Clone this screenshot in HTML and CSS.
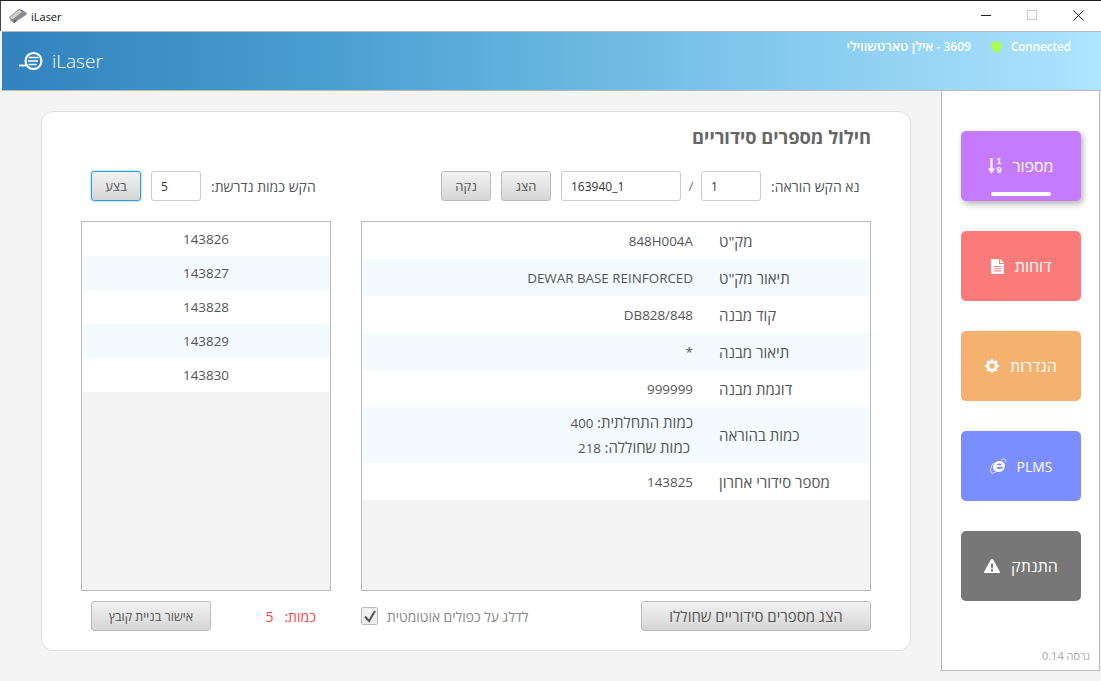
FILE: index.html
```html
<!DOCTYPE html>
<html lang="he">
<head>
<meta charset="utf-8">
<title>iLaser</title>
<link rel="stylesheet" href="styles.css">
</head>
<body>
<div class="window">
  <div class="titlebar">
    <svg class="app-icon" width="18" height="16" viewBox="0 0 18 16"><path d="M0 9 10 1l3 1 5 3-1 2-9 6-3 2-3-2z" fill="#8a8a8a"/><path d="M1 9l9-7 3 2-9 7-2 0z" fill="#cfcfcf"/><path d="M5 12l3 1-3 2z" fill="#555"/></svg>
    <span class="app-name">iLaser</span>
    <div class="win-controls">
      <svg width="46" height="12" viewBox="0 0 46 12"><path d="M0 5.5h10" stroke="#222" fill="none"/></svg>
      <svg width="46" height="12" viewBox="0 0 46 12"><rect x=".5" y=".5" width="9" height="9" stroke="#ccc" fill="none"/></svg>
      <svg width="11" height="12" viewBox="0 0 11 12"><path d="M.5.5l10 10M10.500.5l-10 10" stroke="#222" fill="none"/></svg>
    </div>
  </div>
  <header class="header">
    <div class="brand">
      <svg width="24" height="22" viewBox="0 0 24 22"><circle cx="14.500" cy="11" r="8" fill="none" stroke="#fff" stroke-width="2.200"/><path d="M9.500 7.500h10M9 11h10M9.500 14.500h8" stroke="#fff" stroke-width="1.600" fill="none"/><path d="M0 15.500h7" stroke="#fff" stroke-width="1.800" fill="none"/></svg>
      <span class="brand-name">iLaser</span>
    </div>
    <div class="status">
      <span class="user"><bdi class="user-name">אילן טארטשווילי</bdi> - 3609</span>
      <span class="dot"></span>
      <span class="conn">Connected</span>
    </div>
  </header>
  <div class="content" dir="rtl">
    <aside class="sidebar">
      <div class="nav">
        <a class="nav-btn purple active"><span class="nav-he">מספור</span>
          <span class="sort-icon" dir="ltr">
            <svg width="7" height="16" viewBox="0 0 7 16"><path d="M3.500 0v12" stroke="#fff" stroke-width="2.200" fill="none"/><path d="M0 10.500h7L3.500 15.500z" fill="#fff"/></svg>
            <span class="digits"><span>1</span><span>9</span></span>
          </span></a>
        <a class="nav-btn red"><span class="nav-he">דוחות</span>
          <svg width="13" height="15" viewBox="0 0 13 15"><path d="M0 0h8l5 5v10H0z" fill="#fff"/><path d="M8 0v5h5z" fill="#fb7b7b"/><path d="M9 0l4 4H9z" fill="#fff"/><path d="M3 7.500h7M3 9.800h7M3 12h7" stroke="#fb7b7b"/></svg></a>
        <a class="nav-btn orange"><span class="nav-he">הגדרות</span>
          <svg width="14" height="14" viewBox="0 0 14 14"><circle cx="7" cy="7" r="4.300" fill="none" stroke="#fff" stroke-width="3"/><path d="M7 0v14M0 7h14M2 2l10 10M12 2 2 12" stroke="#fff" stroke-width="2.200" stroke-dasharray="2.500 9 2.500"/></svg></a>
        <a class="nav-btn blue"><span>PLMS</span>
          <svg width="16" height="16" viewBox="0 0 16 16"><path d="M3 9.500c0-4 3-6.500 6.500-6.500S15 5.500 15 9H6.500c.2 2.500 4 3 6.500.5h2c-1.500 3.500-4 4.500-6 4.500-3.500 0-6-2-6-4.500zM6.500 7.200h5.300C11.500 4.800 7 4.800 6.500 7.200z" fill="#fff" fill-rule="evenodd"/><path d="M3.500 5C1 8 0 12 1 14.500c1 1 3.500.5 5-.5M11 2c2-1.200 3.800-1.500 4.500-.5.400.8 0 2-.5 3" fill="none" stroke="#fff" stroke-width=".8"/></svg></a>
        <a class="nav-btn gray"><span class="nav-he">התנתק</span>
          <svg width="16" height="14" viewBox="0 0 16 14"><path d="M8 0c.5 0 .8.300 1 .6l6.800 11.800c.4.700 0 1.600-.8 1.600H1c-.8 0-1.200-.9-.8-1.600L7 .6C7.200.3 7.500 0 8 0z" fill="#fff"/><path d="M7 4.500h2l-.2 5H7.200zM7 10.500h2v2H7z" fill="#777"/></svg></a>
      </div>
      <div class="version">גרסה 0.14</div>
    </aside>
    <main class="main">
      <section class="card">
        <h1 class="title">חילול מספרים סידוריים</h1>
        <div class="cols form-row">
          <div class="col wide form-part">
            <label>נא הקש הוראה:</label>
            <input class="field w60" dir="ltr" value="1">
            <span class="slash">/</span>
            <input class="field w120" dir="ltr" value="163940_1">
            <button class="btn w50">הצג</button>
            <button class="btn w50">נקה</button>
          </div>
          <div class="col narrow form-part narrow-form">
            <label>הקש כמות נדרשת:</label>
            <input class="field w50" dir="ltr" value="5">
            <button class="btn w50 focus">בצע</button>
          </div>
        </div>
        <div class="cols panels">
          <div class="col wide panel">
            <div class="row"><div class="k">מק"ט</div><div class="v"><bdi>848H004A</bdi></div></div>
            <div class="row alt"><div class="k">תיאור מק"ט</div><div class="v"><bdi>DEWAR BASE REINFORCED</bdi></div></div>
            <div class="row"><div class="k">קוד מבנה</div><div class="v"><bdi>DB828/848</bdi></div></div>
            <div class="row alt"><div class="k">תיאור מבנה</div><div class="v">*</div></div>
            <div class="row"><div class="k">דוגמת מבנה</div><div class="v">999999</div></div>
            <div class="row alt tall"><div class="k">כמות בהוראה</div><div class="v"><div><span class="he">כמות התחלתית:</span> 400</div><div class="indent"><span class="he">כמות שחוללה:</span> 218</div></div></div>
            <div class="row"><div class="k">מספר סידורי אחרון</div><div class="v">143825</div></div>
          </div>
          <div class="col narrow panel">
            <div class="item">143826</div>
            <div class="item alt">143827</div>
            <div class="item">143828</div>
            <div class="item alt">143829</div>
            <div class="item">143830</div>
          </div>
        </div>
        <div class="cols foot">
          <div class="col wide foot-part">
            <button class="btn w230">הצג מספרים סידוריים שחוללו</button>
            <div class="check-wrap">
              <span class="check-text">לדלג על כפולים אוטומטית</span>
              <span class="check"><svg width="14" height="13" viewBox="0 0 14 13"><path d="M2 6.500 6 11l6-10" fill="none" stroke="#555" stroke-width="2"/></svg></span>
            </div>
          </div>
          <div class="col narrow foot-part narrow-foot">
            <span class="count"><span>כמות:</span><span>5</span></span>
            <button class="btn w120">אישור בניית קובץ</button>
          </div>
        </div>
      </section>
    </main>
  </div>
</div>
</body>
</html>
```
FILE: styles.css
```css
* { box-sizing: border-box; }
html, body { margin: 0; height: 100%; overflow: hidden; }
body { font-family: "Open Sans", "Noto Sans", sans-serif; font-size: 13.400px; color: #555; background: #f4f4f4; }
.window { height: 681px; width: 1101px; display: flex; flex-direction: column; border-top: 1px solid #222; }

.titlebar { height: 30px; flex: none; display: flex; align-items: center; background: #fff; padding: 0 17px 0 8px; border-left: 1px solid #444; }
.app-icon { margin-right: 4px; }
.app-name { font-size: 11px; color: #111; }
.win-controls { margin-left: auto; display: flex; align-items: flex-start; height: 12px; margin-top: -1px; }
.win-controls svg { display: block; }

.header { height: 60px; flex: none; display: flex; justify-content: space-between; margin-left: 2px; background: linear-gradient(90deg, #3182bd 0%, #4a9fd1 30%, #7cc4ea 65%, #aee4ff 100%); border-top: 1px solid #bbb; border-bottom: 1px solid #bbb; color: #fff; }
.brand { display: flex; align-items: center; gap: 9px; padding-left: 17px; }
.brand-name { font-size: 19px; font-weight: 300; }
.status { display: flex; align-items: center; align-self: flex-start; height: 28px; padding-right: 30px; font-size: 12px; font-weight: 600; }
.user { margin-right: 20px; }
.user-name { font-size: 13px; }
.dot { width: 11px; height: 11px; border-radius: 50%; background: #a8ff50; margin-right: 9px; }
.conn { font-size: 11.600px; }

.content { flex: 1; display: flex; min-height: 0; }
.sidebar { width: 159px; height: 580px; flex: none; margin-right: 1px; display: flex; flex-direction: column; background: #fff; border: 1px solid #bbb; border-top: 0; padding: 40px 18px 0 19px; }
.nav { display: flex; flex-direction: column; gap: 30px; }
.nav-btn { height: 70px; border-radius: 5px; color: #fff; font-size: 14px; display: flex; align-items: center; justify-content: center; gap: 11px; position: relative; }
.nav-he { font-size: 16px; }
.purple { background: #c47bff; }
.active { box-shadow: 2px 3px 6px rgba(0,0,0,.3); }
.active::after { content: ""; position: absolute; left: 30px; right: 30px; bottom: 5px; height: 4px; border-radius: 3px; background: #fff; }
.red { background: #fb7b7b; }
.orange { background: #f4b16f; }
.blue { background: #7b8eff; }
.gray { background: #777; }
.sort-icon { display: flex; align-items: center; gap: 1px; }
.digits { display: flex; flex-direction: column; font-family: "Liberation Sans", sans-serif; font-size: 9px; line-height: 9px; font-weight: 700; color: #fff; }
.version { margin-top: auto; padding-bottom: 7px; margin-right: -9px; text-align: right; font-size: 11px; color: #aaa; }

.main { flex: 1; padding: 20px 30px 0 41px; }
.card { height: 540px; width: 870px; background: #fff; border: 1px solid #ddd; border-radius: 12px; padding: 0 39px; display: flex; flex-direction: column; }
.title { margin: 13px 0 0; font-size: 18.300px; font-weight: 700; line-height: 24px; color: #666; height: 46px; }
.cols { display: flex; gap: 30px; }
.wide { width: 510px; }
.narrow { width: 250px; }
.form-row { height: 30px; }
.form-part { display: flex; align-items: center; justify-content: flex-end; gap: 10px; padding-left: 80px; }
.narrow-form { padding-left: 10px; }
.form-part label { color: #555; font-size: 14px; }
.slash { width: 20px; text-align: center; color: #777; margin: 0 -10px; }
.field { height: 30px; border: 1px solid #ccc; border-radius: 3px; padding: 0 9px; font: 12px "Open Sans", sans-serif; color: #333; background: #fff; text-align: left; outline: none; }
.w50 { width: 50px; }
.w60 { width: 60px; }
.w120 { width: 120px; }
.w230 { width: 230px; font-size: 15px; }
.btn { height: 30px; border: 1px solid #bbb; border-radius: 3px; background: linear-gradient(#f2f2f2, #d6d6d6); font-family: "Open Sans", sans-serif; color: #555; padding: 0; }
.btn.w50 { font-size: 13px; }
.btn.w120 { font-size: 12.500px; }
.focus { border-color: #2ea3dc; box-shadow: 0 0 0 1px rgba(90,190,235,.35); }

.panels { margin-top: 20px; height: 370px; }
.panel { border: 1px solid #bbb; background: #f4f4f4; }
.row { height: 37px; display: flex; align-items: center; background: #fff; }
.tall { height: 56px; }
.alt { background: #f4fbff; }
.k { width: 151px; flex: none; text-align: left; font-size: 15px; color: #555; }
.v { flex: 1; text-align: right; padding-right: 26px; line-height: 24px; }
.he { font-size: 15px; }
.indent { padding-right: 3px; }
.item { height: 34px; display: flex; align-items: center; justify-content: center; background: #fff; }
.item.alt { background: #f4fbff; }
.foot { margin-top: 10px; height: 30px; }
.foot-part { display: flex; align-items: center; justify-content: space-between; }
.narrow-foot { padding: 0 15px 0 10px; }
.check-wrap { display: flex; align-items: center; gap: 9px; }
.check-text { color: #888; font-size: 13.800px; }
.check { width: 17px; height: 18px; border: 1px solid #bbb; border-radius: 2px; background: #f0f0f0; display: flex; align-items: center; justify-content: center; }
.count { color: #f44; display: flex; gap: 11px; font-size: 14px; }
```
